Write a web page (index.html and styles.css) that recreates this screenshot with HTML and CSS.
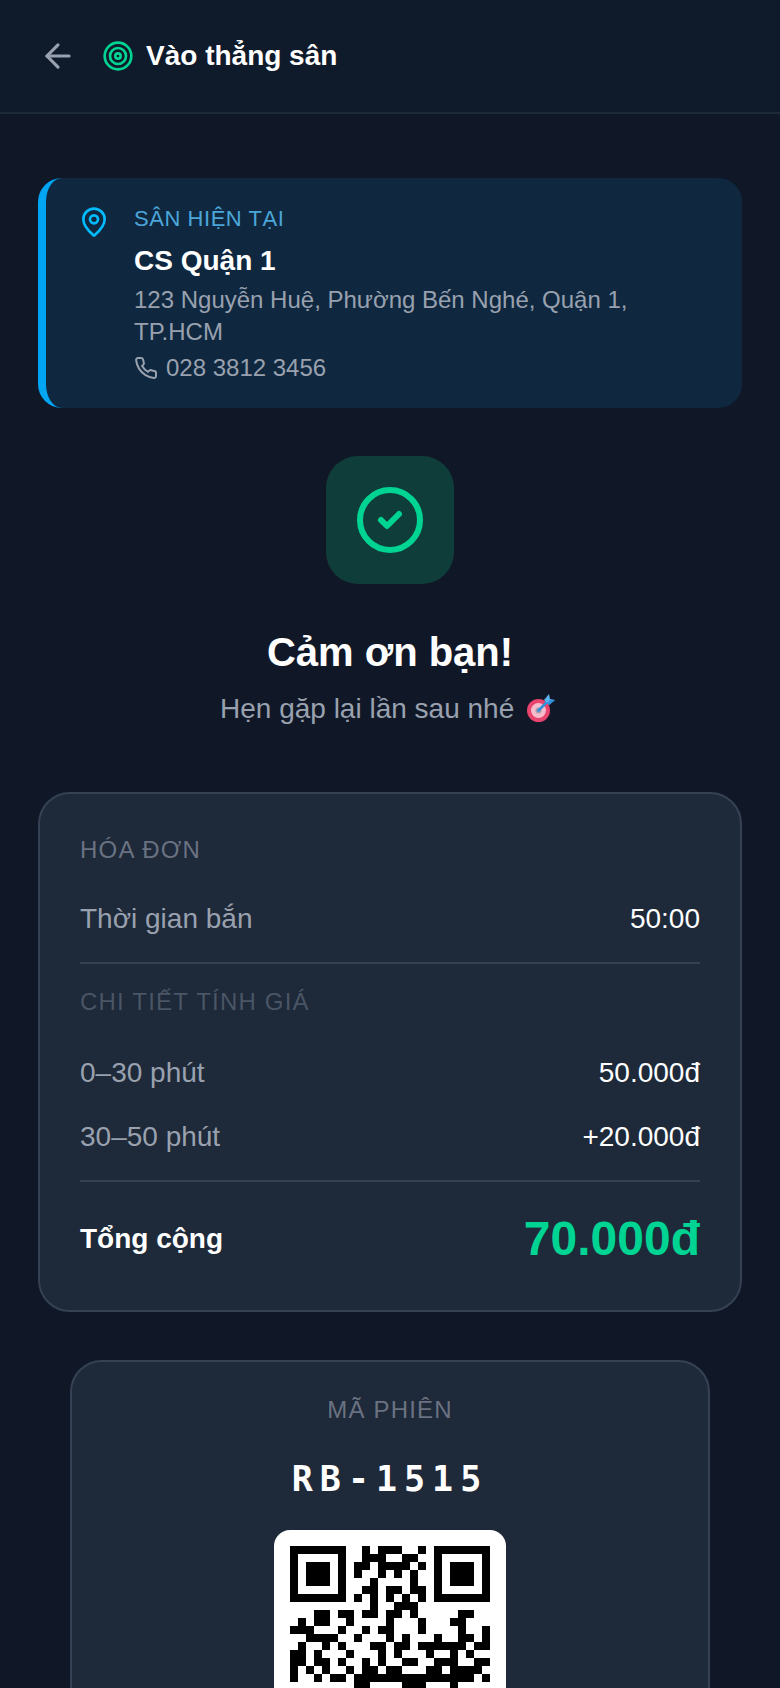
FILE: index.html
```html
<!DOCTYPE html>
<html lang="vi">
<head>
<meta charset="utf-8">
<title>Vào thẳng sân</title>
<link rel="stylesheet" href="styles.css">
</head>
<body>
<div class="app">
  <header class="topbar">
    <svg class="icon-back" viewBox="0 0 24 24"><path d="M19 12H5"/><path d="m12 19-7-7 7-7"/></svg>
    <svg class="icon-target" viewBox="0 0 24 24"><circle cx="12" cy="12" r="10"/><circle cx="12" cy="12" r="6"/><circle cx="12" cy="12" r="2"/></svg>
    <h1 class="topbar-title">Vào thẳng sân</h1>
  </header>
  <main class="content">
    <section class="venue">
      <svg class="icon-pin" viewBox="0 0 24 24"><path d="M20 10c0 4.993-5.539 10.193-7.399 11.799a1 1 0 0 1-1.202 0C9.539 20.193 4 14.993 4 10a8 8 0 0 1 16 0"/><circle cx="12" cy="10" r="3"/></svg>
      <div class="venue-body">
        <div class="venue-label">SÂN HIỆN TẠI</div>
        <div class="venue-name">CS Quận 1</div>
        <div class="venue-address">123 Nguyễn Huệ, Phường Bến Nghé, Quận 1, TP.HCM</div>
        <div class="venue-phone">
          <svg class="icon-phone" viewBox="0 0 24 24"><path d="M22 16.92v3a2 2 0 0 1-2.18 2 19.79 19.79 0 0 1-8.63-3.07 19.5 19.5 0 0 1-6-6 19.79 19.79 0 0 1-3.07-8.67A2 2 0 0 1 4.11 2h3a2 2 0 0 1 2 1.72 12.84 12.84 0 0 0 .7 2.81 2 2 0 0 1-.45 2.11L8.09 9.91a16 16 0 0 0 6 6l1.27-1.27a2 2 0 0 1 2.11-.45 12.84 12.84 0 0 0 2.81.7A2 2 0 0 1 22 16.92z"/></svg>
          <span>028 3812 3456</span>
        </div>
      </div>
    </section>

    <section class="thanks">
      <div class="thanks-badge">
        <svg class="icon-check" viewBox="0 0 24 24"><circle cx="12" cy="12" r="10"/><path d="m9 12 2 2 4-4"/></svg>
      </div>
      <h2 class="thanks-title">Cảm ơn bạn!</h2>
      <p class="thanks-sub">Hẹn gặp lại lần sau nhé <svg class="emoji-target" viewBox="0 0 28 28" role="img" aria-label="🎯"><circle class="e-ring" cx="11.5" cy="16.5" r="11.5"/><circle class="e-inner" cx="11.5" cy="16.5" r="7.5"/><circle class="e-core" cx="11.5" cy="16.5" r="3"/><path class="e-shaft" d="M11.5 16.5 21 7"/><path class="e-fin" d="M17 6 22 0l1 5 5 1-6 5z"/><path class="e-fin-dark" d="m20 9 3-3 5 0-6 5z"/></svg></p>
    </section>

    <section class="card invoice">
      <div class="label label-strong">HÓA ĐƠN</div>
      <div class="row row-first"><span>Thời gian bắn</span><span class="value">50:00</span></div>
      <div class="divider"></div>
      <div class="label label-dim">CHI TIẾT TÍNH GIÁ</div>
      <div class="row row-tier-first"><span>0–30 phút</span><span class="value">50.000đ</span></div>
      <div class="row row-tier"><span>30–50 phút</span><span class="value">+20.000đ</span></div>
      <div class="divider divider-total"></div>
      <div class="total"><span class="total-label">Tổng cộng</span><span class="total-value">70.000đ</span></div>
    </section>

    <section class="card session">
      <div class="label label-strong">MÃ PHIÊN</div>
      <div class="session-code">RB-1515</div>
      <div class="qr">
        <svg class="qr-code" viewBox="0 0 25 25" shape-rendering="crispEdges"><path d="M0 0h7v1H0zM0 6h7v1H0zM0 1h1v5H0zM6 1h1v5H6zM2 2h3v3H2zM18 0h7v1h-7zM18 6h7v1h-7zM18 1h1v5h-1zM24 1h1v5h-1zM20 2h3v3h-3zM0 18h7v1H0zM0 24h7v1H0zM0 19h1v5H0zM6 19h1v5H6zM2 20h3v3H2zM9 0h1v1H9zM11 0h3v1h-3zM16 0h1v1h-1zM9 1h3v1H9zM14 1h2v1h-2zM8 2h2v1H8zM11 2h4v1h-4zM16 2h1v1h-1zM8 3h1v1H8zM11 3h1v1h-1zM13 3h1v1h-1zM15 3h1v1h-1zM10 4h1v1h-1zM15 4h1v1h-1zM9 5h2v1H9zM12 5h2v1h-2zM15 5h2v1h-2zM8 6h1v1H8zM10 6h1v1h-1zM12 6h1v1h-1zM14 6h1v1h-1zM16 6h1v1h-1zM10 7h1v1h-1zM13 7h3v1h-3zM3 8h2v1H3zM6 8h2v1H6zM9 8h2v1H9zM12 8h2v1h-2zM15 8h1v1h-1zM21 8h2v1h-2zM1 9h1v1H1zM3 9h2v1H3zM7 9h1v1H7zM12 9h1v1h-1zM16 9h1v1h-1zM20 9h2v1h-2zM0 10h3v1H0zM6 10h1v1H6zM9 10h1v1H9zM11 10h2v1h-2zM16 10h1v1h-1zM21 10h1v1h-1zM24 10h1v1h-1zM2 11h4v1H2zM8 11h1v1H8zM12 11h1v1h-1zM14 11h1v1h-1zM18 11h1v1h-1zM21 11h2v1h-2zM24 11h1v1h-1zM1 12h1v1H1zM4 12h1v1H4zM6 12h1v1H6zM10 12h2v1h-2zM13 12h2v1h-2zM16 12h6v1h-6zM23 12h2v1h-2zM0 13h2v1H0zM3 13h1v1H3zM7 13h1v1H7zM11 13h1v1h-1zM13 13h1v1h-1zM17 13h1v1h-1zM20 13h1v1h-1zM22 13h1v1h-1zM0 14h2v1H0zM3 14h2v1H3zM6 14h1v1H6zM9 14h1v1H9zM11 14h1v1h-1zM14 14h2v1h-2zM18 14h3v1h-3zM23 14h2v1h-2zM0 15h1v1H0zM2 15h1v1H2zM4 15h1v1H4zM7 15h1v1H7zM9 15h2v1H9zM12 15h2v1h-2zM17 15h2v1h-2zM20 15h4v1h-4zM0 16h1v1H0zM3 16h1v1H3zM5 16h2v1H5zM8 16h15v1H8zM24 16h1v1h-1zM8 17h2v1H8zM14 17h3v1h-3zM20 17h1v1h-1z"/></svg>
      </div>
    </section>
  </main>
</div>
</body>
</html>
```

FILE: styles.css
```css
* { box-sizing: border-box; margin: 0; padding: 0; }

html, body {
  height: 1688px;
  overflow: hidden;
  background: #101828;
}

body {
  font-family: "Liberation Sans", Arial, sans-serif;
  color: #fff;
}

.app { display: flex; flex-direction: column; }

svg { fill: none; stroke: currentColor; stroke-width: 2; stroke-linecap: round; stroke-linejoin: round; flex: none; display: block; }

.topbar {
  height: 114px;
  display: flex;
  align-items: center;
  padding: 0 38px 0 39px;
  background: #0f1a2a;
  border-bottom: 2px solid #1e2939;
}

.icon-back { width: 38px; height: 38px; color: #99a1af; margin-right: 25px; }
.icon-target { width: 32px; height: 32px; color: #00d492; margin-right: 12px; }
.topbar-title { font-size: 28px; font-weight: 700; line-height: 32px; }

.content { padding: 64px 38px 0; display: flex; flex-direction: column; align-items: stretch; }

.venue {
  display: flex;
  gap: 24px;
  padding: 27px 32px 24px;
  background: #0f2840;
  border-left: 8px solid #00a6f4;
  border-radius: 24px;
}

.icon-pin { width: 32px; height: 32px; margin-top: 1px; color: #00bcff; }
.venue-body { flex: 1; }
.venue-label { font-size: 22px; line-height: 28px; letter-spacing: 0.55px; color: #4ba6d9; }
.venue-name { font-size: 28px; font-weight: 700; line-height: 36px; margin-top: 10px; }
.venue-address { font-size: 24px; line-height: 32px; color: #99a1af; margin-top: 5px; }
.venue-phone { display: flex; align-items: center; gap: 8px; font-size: 24px; line-height: 32px; color: #99a1af; margin-top: 4px; }
.icon-phone { width: 24px; height: 24px; stroke-width: 2; }

.thanks { display: flex; flex-direction: column; align-items: center; margin-top: 48px; }
.thanks-badge { width: 128px; height: 128px; border-radius: 32px; background: #0f3d3a; display: flex; align-items: center; justify-content: center; }
.icon-check { width: 72px; height: 72px; color: #00d492; }
.thanks-title { font-size: 40px; font-weight: 700; line-height: 48px; margin-top: 44px; }
.thanks-sub { font-size: 28px; line-height: 40px; color: #99a1af; margin-top: 13px; }

.emoji-target { display: inline-block; width: 28px; height: 28px; margin: 0 5px 0 5px; vertical-align: -4px; stroke: none; }
.e-ring { fill: #e8446e; }
.e-inner { fill: #f5bccb; }
.e-core { fill: #a99cab; }
.e-shaft { stroke: #2f8fdc; stroke-width: 2.5; }
.e-fin { fill: #5ab2ee; }
.e-fin-dark { fill: #2f8fdc; }

.card { background: #1e2939; border: 2px solid #364153; border-radius: 32px; }

.invoice { margin-top: 63px; padding: 42px 40px 41px; }

.label { font-size: 24px; line-height: 28px; letter-spacing: 1.2px; }
.label-strong { color: #6a7282; }
.label-dim { color: #4a5565; }

.row { display: flex; justify-content: space-between; align-items: center; font-size: 28px; line-height: 40px; color: #99a1af; }
.value { color: #fff; }
.row-first { margin-top: 35px; }
.row-tier-first { margin-top: 37px; }
.row-tier { margin-top: 24px; }
.divider { height: 2px; background: #364153; margin: 23px 0 24px; }
.divider-total { margin: 23px 0 0; }
.total { display: flex; justify-content: space-between; align-items: center; margin-top: 27px; }
.total-label { font-size: 28px; font-weight: 700; }
.total-value { font-size: 48px; font-weight: 700; line-height: 60px; color: #00d492; }

.session { margin: 48px 32px 0; padding: 34px 0 0; display: flex; flex-direction: column; align-items: center; }
.session-code { font-family: "DejaVu Sans Mono", monospace; font-size: 35px; font-weight: 700; line-height: 40px; letter-spacing: 7px; margin-top: 35px; }
.qr { width: 232px; height: 232px; margin-top: 31px; padding: 16px; background: #fff; border-radius: 16px; }
.qr-code { width: 200px; height: 200px; fill: #000; stroke: none; }
```
